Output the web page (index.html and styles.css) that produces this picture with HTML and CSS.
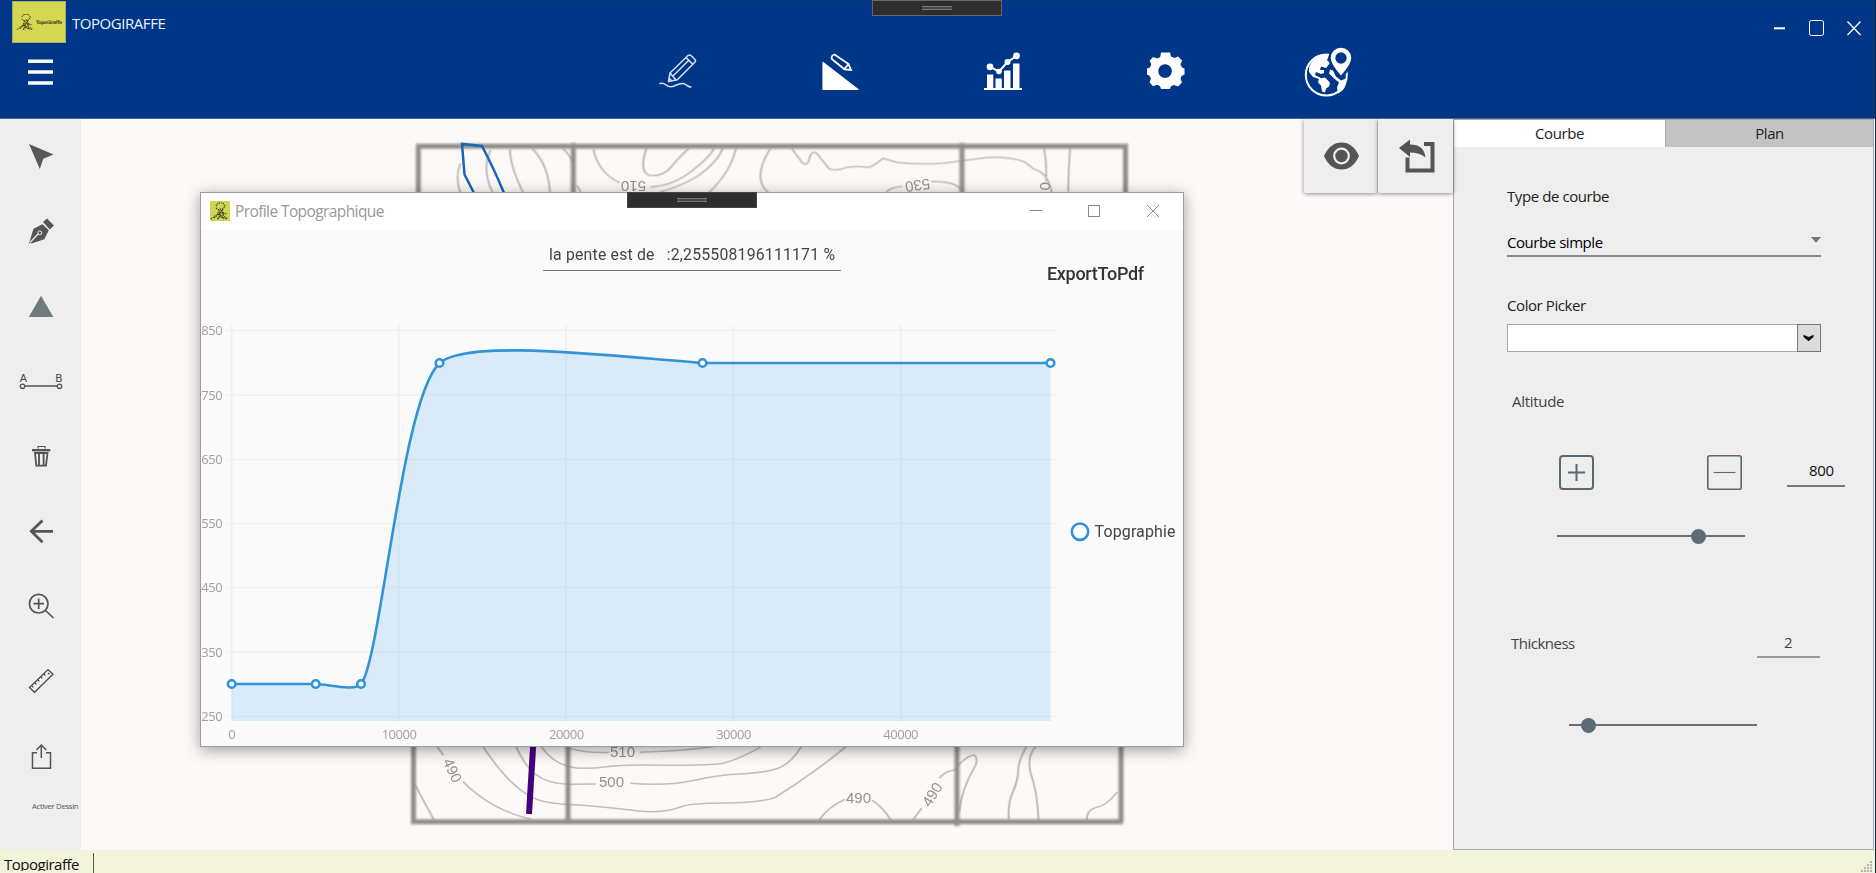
FILE: index.html
```html
<!DOCTYPE html>
<html lang="fr">
<head>
<meta charset="utf-8">
<title>TopoGiraffe</title>
<link rel="stylesheet" href="styles.css">
</head>
<body>
<svg width="0" height="0" class="defs">
  <symbol id="giraffe" viewBox="0 0 20 20">
    <g fill="none" stroke="#3c3d1c" stroke-width="1.100" stroke-dasharray="1.300 .9">
      <path d="M6 5l2-3 5 0 2 3-2 3-4 0"/>
      <path d="M9 9l-1 3 4-2 2 3M6 7l3 2 5-1"/>
      <path d="M1 18l4-3 3-2 3 2-4 3"/>
      <path d="M8 18l3-7 4 5 3 2"/>
      <path d="M9 13l5 5M12 9l1 7M4 17l6-5M13 12l4 1M11 16l6 2"/>
    </g>
  </symbol>
</svg>
<div class="app">
  <header class="header">
    <div class="titlebar">
      <div class="logo">
        <svg width="19" height="20"><use href="#giraffe"/></svg><span>TopoGiraffe</span>
      </div>
      <h1 class="app-title">TOPOGIRAFFE</h1>
      <svg class="window-controls" width="100" height="44" viewBox="1770 0 100 44" fill="none" stroke="#fff">
        <path d="M1774 28.3h11" stroke-width="2"/>
        <rect x="1809.5" y="20.5" width="14" height="15" rx="2"/>
        <path d="M1847.500 21.500l13 13.500M1860.500 21.500l-13 13.500" stroke-width="1.300"/>
      </svg>
    </div>
    <nav class="toolbar">
      <svg class="menu" width="25" height="30" viewBox="0 0 25 30"><path d="M0 3.200h25M0 14h25M0 25h25" stroke="#fff" stroke-width="3.600"/></svg>
      <div class="tools">
        <svg viewBox="649 43.500 58 58"><g fill="none" stroke="#d5e0f3" stroke-width="1.500" stroke-linejoin="round" stroke-linecap="round"><path d="M668.500 82l1.500-8.500 18-17.500q2-1 3.500.5l3.300 3.300q1.500 1.500 0 3l-17.500 17.500zM670 73.500l6 7M686 58l7 7M673 76.500l16-16M669.500 79l2 2M660 84c5-2 6 3.500 11 3.300 5-.5 7-3.800 12-3.300 4 .500 4 3.500 8 3.500"/></g></svg>
        <svg viewBox="812 43.500 58 58"><path d="M823 63v27h35z" fill="#fff" stroke="#fff" stroke-width="1.200" stroke-linejoin="round"/><path d="M834.500 55l14 9.500 2.500 6-6.500-.7-12.500-10q-1.500-3.500 2.500-4.800zM848.500 64.500l-4 5" fill="none" stroke="#fff" stroke-width="1.800"/></svg>
        <svg viewBox="974 43.500 58 58"><g fill="#fff"><path d="M984 88.500h38v2h-38zM987 75h6.300v14H987zM995.500 79h6.300v10h-6.300zM1004 71h6.500v18h-6.500zM1013 64h6.500v25h-6.500z"/><circle cx="990" cy="67.300" r="3.400"/><circle cx="999" cy="72" r="2.800"/><circle cx="1007.500" cy="62.500" r="3"/><circle cx="1016.500" cy="56.300" r="3.400"/></g><path d="M990 67.300l9 4.700 8.500-9.500 9-6" fill="none" stroke="#fff" stroke-width="2"/></svg>
        <svg viewBox="1137 43.500 58 58"><path fill="#fff" fill-rule="evenodd" d="M1161 53h9l1 4 3.500 1.500 3.500-1.500 4 4-1.500 4 1.500 3 2.500 1v6l-3 1.500-1 3 1.500 3.500-4 4-4-1.500-3 1.200-1 2.800h-9l-1-3-3-1.200-4 1.500-3.500-4 1.500-3.500-1.500-3-2.500-1.200v-6l3-1.200 1.200-3-1.500-4 3.500-3.500 4 1.500 3-1.500zM1165 64.700a6.800 6.800 0 1 0 .1 0z"/></svg>
        <svg viewBox="1299 42.500 58 58"><circle cx="1326.300" cy="74.500" r="20.500" fill="none" stroke="#fff" stroke-width="2"/><path fill="#fff" d="M1309 67q3-9 12-12l9-1.500-3 6 3 3-4 5-5-1.500-1 3.500h4v3l-3 1-5-2-1 3 6 3-2 1-6-2-4-5zM1319 78l6-1 5 5-1 4-3 2-1 4-3-1-1-6-3-3zM1330 69l3 1 3 6 5 4 5-2q1 11-8 15l-1-6 2-5-6-5-4-4z"/><path d="M1341 79q-12.500-13.500-12.500-21.300a12.500 12.500 0 0 1 25 0q0 7.800-12.500 21.300z" fill="#003687"/><path d="M1341 75q-10.300-11.500-10.300-17.500a10.300 10.300 0 0 1 20.600 0q0 6-10.300 17.500z" fill="#fff"/><circle cx="1341" cy="57.500" r="5.700" fill="#003687"/></svg>
      </div>
    </nav>
  </header>

  <main class="workspace">
    <aside class="sidebar">
      <svg viewBox="0 119 81 75"><path d="M29 144l24.500 10.500-10.200 4.200-3.500 10.300z" fill="#595959"/></svg>
      <svg viewBox="0 194 81 75"><g fill="#555"><path d="M29 243.300l4.500-14.500 9-4.500 6.300 6-4.500 9-12 4z"/><path d="M43 222l4-3.500 7 7-4.200 4z"/></g><path d="M30 242.500l9-9.500" stroke="#eee" stroke-width="1.200"/><circle cx="39.800" cy="232.800" r="1.900" fill="#555" stroke="#eee"/></svg>
      <svg viewBox="0 269 81 75"><path d="M41 295.700l12.300 21.300H28.800z" fill="#6f7b7c"/></svg>
      <svg viewBox="0 344 81 75"><g fill="none" stroke="#555" stroke-width="1.300"><circle cx="22.500" cy="386.300" r="2.200"/><circle cx="59.500" cy="386.300" r="2.200"/><path d="M25 386h32.500"/></g><text x="19.700" y="382" class="ab">A</text><text x="55.300" y="382" class="ab">B</text></svg>
      <svg viewBox="0 419 81 75"><g fill="none" stroke="#555"><path d="M38 448.500v-2h7v2" stroke-width="1.200"/><path d="M32 450.200h18.300" stroke-width="2.400"/><path d="M35 453l1.300 12.700h9.700l1.500-12.700z" stroke-width="1.800"/><path d="M39 454v11M43.600 454v11" stroke-width="1.900"/></g></svg>
      <svg viewBox="0 494 81 75"><path d="M53 531.300H31M42.500 520.500L31.300 531.300l11.200 11" fill="none" stroke="#555" stroke-width="2.800"/></svg>
      <svg viewBox="0 569 81 75"><path d="M45.500 610.500l8 7.500M33.500 603.700h10.500M38.700 598.500v10.500" fill="none" stroke="#555" stroke-width="1.700"/><circle cx="38.700" cy="603.700" r="9.300" fill="none" stroke="#555" stroke-width="1.700"/></svg>
      <svg viewBox="0 644 81 75"><g fill="none" stroke="#444" stroke-width="1.200"><path d="M29.500 687.500l18.500-18 5 4.800-18.500 18z"/><path d="M32 686l1.300 1.300M35 683l1.300 1.300M38 680l1.300 1.300M41 677l1.300 1.300M44 674.200l1.300 1.300M48 673l1.500 1.200"/></g></svg>
      <svg viewBox="0 719 81 75"><path d="M37 752.700h-4.500v15.500h18v-15.500h-4.500M41.300 758v-13M36.300 750l5-5 5 5" fill="none" stroke="#555" stroke-width="1.500"/></svg>
      <span class="draw-label">Activer Dessin</span>
    </aside>

    <section class="canvas">
      <svg class="map" width="1372" height="731" viewBox="81 119 1372 731">
        <g class="contours">
          <g transform="translate(400 130) scale(.4719 .33333)">
            <path d="M128 100q-12 40 0 90M192 60q-20 60 5 130M233 58q0 50 28 130M280 55q35 50 38 135M345 55q15 20 20 40M375 165l8 22M410 58q10 70 55 100M522 55q-18 80 12 82 25 0 40-25 10-20 38-57M530 171q50-4 90-50 40-45 45-66M550 187q70-30 100-70 25-30 34-62M655 187q45-60 57-132M785 55q-40 90-5 132M830 55l22 42q12 15 16-15 8-30 22 0l18 32q8 10 30 2 18-10 55-4 12-5 30-27l30 12q50 8 100 2l90-16q45-4 80 12l20 22q30 10 38 70M1030 187q10-16 35-18M1125 155q45-4 62 20M1365 55q6 50 4 100M1420 55q-4 70-4 130"/>
          </g>
          <g transform="translate(400 740) scale(.4719 .33333)">
            <path d="M32 135l40 105M78 18l14 28M133 125q60 85 145 113M175 18q60 130 115 160 30 15 90 17 80 10 120 17 60 10 100-14 20-8 90-9 80-2 105-17 80-70 152-154M245 18q20 60 40 83 30 32 75 32l55-1M488 130q80 8 130-8 40-12 75-18 80-4 110-20 30-20 48-66M298 18q25 50 60 62 30 10 80 0 40-8 120-4 80 0 120-5 30-5 90-53M360 25q35 15 83 12M508 37q100-5 162-18M888 240q20-40 55-62M1000 180q25 25 40 60M1087 240l18-35M1143 115q12-22 32-25 20-38 40-45 10 5 5 30-30 70-35 140M1328 18q-20 50-18 80-2 30-12 60-10 30-8 80M1348 18q-20 30-12 80 15 60 17 142M1455 240q0-30 20-38 20-2 45-46"/>
          </g>
        </g>
        <g class="frame">
          <path d="M416 146.300h712M411 821.700h712M418.300 146v47M573.300 143v50M962 143v50M1125.500 146v47M413.500 740v82M568 740v82M957 740v86M1121 740v82"/>
        </g>
        <g class="map-labels">
          <text x="-12" y="5" transform="translate(634 186) rotate(180)">510</text>
          <text x="-12" y="5" transform="translate(918 185) rotate(172)">530</text>
          <text x="0" y="5" transform="translate(1045 182) rotate(90)">0</text>
          <text x="610" y="757">510</text><text x="599" y="786.500">500</text><text x="846" y="803">490</text>
          <text x="-12" y="5" transform="translate(452 770) rotate(65)">490</text>
          <text x="-12" y="5" transform="translate(932 795) rotate(-58)">490</text>
        </g>
        <path d="M474 193l-9.500-18.500-2.500-30.500 20 2q13 25 22 47" fill="none" stroke="#1565ba" stroke-width="2.500"/>
        <path d="M533.500 740L529 814" stroke="#450080" stroke-width="6"/>
      </svg>
      <div class="map-actions">
        <button><svg width="73" height="74" viewBox="1304 119 73 74"><path d="M1324 156q6-13.500 17.500-13.500T1359 156q-6 13.500-17.500 13.500T1324 156z" fill="#555"/><circle cx="1341.500" cy="156" r="7.300" fill="none" stroke="#eee" stroke-width="2.200"/></svg></button>
        <button><svg width="75" height="74" viewBox="1378 119 75 74"><path d="M1424 144h8.500v26.500h-25v-13" fill="none" stroke="#555" stroke-width="4"/><path d="M1399 148l11-8.500v5q14 0 15.500 13-6-5-15.500-5v4.500z" fill="#555"/></svg></button>
      </div>
    </section>

    <aside class="panel">
      <div class="tabs"><div class="tab active">Courbe</div><div class="tab">Plan</div></div>
      <div class="form">
        <label class="type-label">Type de courbe</label>
        <div class="select"><span>Courbe simple</span><i></i></div>
        <label class="color-label">Color Picker</label>
        <div class="color"><svg width="24" height="28" viewBox="0 0 24 28"><path d="M6 10.500l5.500 2.500 5.500-2.500v2.500l-5.500 4.500-5.500-4.500z" fill="#111"/></svg></div>
        <label class="alt-label">Altitude</label>
        <div class="stepper">
          <svg width="35" height="35" fill="none" stroke="#5a6871"><rect x="1" y="1" width="33" height="33" rx="3" stroke-width="2"/><path d="M9 17.500h17M17.500 9v17" stroke-width="2"/></svg>
          <svg width="35" height="35" fill="none" stroke="#5a6871"><rect x=".8" y=".8" width="33.400" height="33.400" rx="2" stroke-width="1.600"/><path d="M6.500 17.500h22" stroke-width="1.100"/></svg>
          <div class="value alt-value">800</div>
        </div>
        <div class="slider alt-slider"><b></b></div>
        <div class="thickness"><label>Thickness</label><div class="value thick-value">2</div></div>
        <div class="slider thick-slider"><b></b></div>
      </div>
    </aside>
  </main>

  <footer class="statusbar"><span>Topogiraffe</span><i></i>
    <svg width="16" height="14" viewBox="0 0 16 14"><path d="M11 2h2M8 5h5M5 8h8M2 11h11" stroke="#b5b5a8" stroke-width="2" stroke-dasharray="2 1"/></svg>
  </footer>

  <div class="debug-bar main-bar"><i></i></div>

  <section class="dialog">
    <div class="dialog-title">
      <svg class="dialog-icon" width="20" height="20"><use href="#giraffe"/></svg>
      <h2>Profile Topographique</h2>
      <svg width="130" height="20" viewBox="1029 201 130 20" fill="none" stroke="#888"><path d="M1030 210.500h12M1147 205l12 12M1159 205l-12 12"/><rect x="1088.500" y="205.500" width="11" height="11"/></svg>
    </div>
    <div class="dialog-head">
      <div class="slope"><span>la pente est de</span><span class="ratio">:2,255508196111171 %</span></div>
      <button class="export">ExportToPdf</button>
    </div>
    <svg class="chart" width="982" height="446" viewBox="201 300 982 446">
      <path d="M231.700 684L315.700 684C327 684 355 692 361 684C381 660 401 400 439.500 363C468 339 600 355 702.500 363H1050.500V721H231.700z" fill="#d9ebf9"/>
      <path class="grid" d="M227 330.500h829M227 395h829M227 459.500h829M227 523.500h829M227 587.500h829M227 652h829M227 716.500h829M231.700 325v396M399 325v396M566.300 325v396M733.500 325v396M900.700 325v396"/>
      <path class="line" d="M231.700 684L315.700 684C327 684 355 692 361 684C381 660 401 400 439.500 363C468 339 600 355 702.500 363H1050.500"/>
      <g class="points"><circle cx="231.700" cy="684" r="3.800"/><circle cx="315.700" cy="684" r="3.800"/><circle cx="361" cy="684" r="3.800"/><circle cx="439.500" cy="363" r="3.800"/><circle cx="702.500" cy="363" r="3.800"/><circle cx="1050.500" cy="363" r="3.800"/><circle cx="1080" cy="531.700" r="8.200"/></g>
      <g class="axis">
        <text x="201.300" y="335">850</text><text x="201.300" y="399.500">750</text><text x="201.300" y="464">650</text><text x="201.300" y="528">550</text><text x="201.300" y="592">450</text><text x="201.300" y="656.500">350</text><text x="201.300" y="721">250</text>
      </g>
      <g class="axis x"><text x="231.700" y="739">0</text><text x="399" y="739">10000</text><text x="566.300" y="739">20000</text><text x="733.500" y="739">30000</text><text x="900.700" y="739">40000</text></g>
      <text class="legend" x="1094.500" y="537" textLength="81">Topgraphie</text>
    </svg>
    <div class="debug-bar dialog-bar"><i></i></div>
  </section>
</div>
</body>
</html>
```
FILE: styles.css
```css
* { box-sizing: border-box; }
body { margin: 0; font-family: "Open Sans", "Noto Sans", sans-serif; font-size: 15px; color: #333; background: #12283a; overflow: hidden; }
h1, h2 { margin: 0; font-weight: 400; }
button { margin: 0; padding: 0; border: 0; background: none; }
svg { display: block; }
.defs { position: absolute; }
.app { position: relative; width: 1875px; height: 873px; display: flex; flex-direction: column; background: #fdf9f8; }

.header { height: 119px; background: #003687; border-top: 1px solid #093574; border-bottom: 1px solid #53648d; }
.titlebar { display: flex; height: 43px; }
.logo { display: flex; align-items: center; width: 54px; height: 42px; margin-left: 12px; padding-left: 3px; background: #d4d752; border: 1px solid #a4ae6c; }
.logo span { font: bold 4.800px "DejaVu Sans", sans-serif; letter-spacing: -.5px; color: #4b4c20; margin-left: 1px; }
.app-title { margin-left: 6px; font-size: 15px; line-height: 44px; color: #e9f3ff; letter-spacing: -.45px; }
.window-controls { margin-left: auto; margin-right: 5px; margin-top: -1px; }
.toolbar { display: flex; height: 74px; }
.menu { margin: 14px 0 0 28px; }
.tools { display: flex; margin-left: 596px; gap: 104.500px; }
.tools svg { width: 58px; height: 58px; margin-top: -1px; }

.workspace { display: flex; height: 731px; }
.sidebar { width: 81px; background: #eee; flex: none; }
.sidebar svg { width: 81px; height: 75px; }
.ab { font: 10.500px "DejaVu Sans", sans-serif; fill: #444; }
.draw-label { display: block; margin: 6px 0 0 32px; font-size: 7.700px; line-height: 12px; letter-spacing: -.3px; color: #555; white-space: nowrap; }
.canvas { position: relative; width: 1372px; flex: none; }
.contours { fill: none; stroke: #c2bebd; stroke-width: 4.500; filter: blur(.7px); }
.frame { fill: none; stroke: #918d8c; stroke-width: 5; filter: blur(.9px); }
.map-labels { font: 15px "Liberation Sans", sans-serif; fill: #95918f; filter: blur(.6px); }
.map-actions { position: absolute; top: 0; right: 0; display: flex; gap: 1px; }
.map-actions button { background: #eee; border-radius: 0 0 2px 2px; box-shadow: 0 1px 4px rgba(0,0,0,.45); clip-path: inset(0 -4px -6px -4px); }

.panel { width: 421px; flex: none; background: #eee; border: 1px solid #a9a9a9; color: #222; }
.tabs { display: flex; height: 27px; }
.tab { flex: 1; text-align: center; line-height: 26px; font-size: 15px; background: #c3c3c3; letter-spacing: -.4px; }
.tab.active { flex: 0 0 212px; background: #fff; border-right: 1px solid #aaa; }
.form { display: flex; flex-direction: column; padding-left: 53px; }
.form label { font-size: 15px; line-height: 20px; white-space: nowrap; letter-spacing: -.42px; }
.type-label { margin-top: 39px; }
.select { display: flex; justify-content: space-between; width: 314px; height: 30px; margin-top: 21px; border-bottom: 2px solid #888; color: #000; line-height: 30px; letter-spacing: -.45px; }
.select i { margin-top: 10px; width: 0; height: 6px; border: 5px solid transparent; border-top: 6px solid #777; border-bottom: 0; }
.color-label { margin-top: 38px; }
.color { display: flex; justify-content: flex-end; width: 314px; height: 28px; margin-top: 9px; border: 1px solid #aaa; background: #fff; }
.color svg { background: #dcdcdc; border: 1px solid #777; margin: -1px; }
.form .alt-label { margin: 39px 0 0 5px; color: #444; letter-spacing: -.3px; }
.stepper { display: flex; margin: 44px 0 0 52px; }
.stepper svg + svg { margin-left: 113px; }
.value { border-bottom: 2px solid #777; font-size: 15px; }
.alt-value { width: 58px; height: 32px; margin-left: 45px; padding-left: 22px; line-height: 31px; letter-spacing: -.3px; color: #111; }
.slider { width: 188px; height: 16px; display: flex; align-items: center; background: linear-gradient(#6d6f73, #6d6f73) center / 100% 2px no-repeat; }
.slider b { width: 15px; height: 15px; border-radius: 50%; background: #5c6b77; }
.alt-slider { margin: 38px 0 0 50px; padding-left: 134px; }
.thickness { display: flex; margin: 84px 0 0 4px; color: #444; }
.thickness label { margin-top: 5px; width: 246px; letter-spacing: -.5px; }
.thick-value { width: 63px; height: 30px; padding-left: 27px; line-height: 28px; border-color: #999; }
.thick-slider { margin: 59px 0 0 62px; padding-left: 12px; }

.statusbar { display: flex; height: 23px; background: #f3f4dc; color: #111; }
.statusbar span { width: 90px; height: 21px; padding-left: 4px; line-height: 29px; overflow: hidden; font-size: 15px; letter-spacing: -.5px; }
.statusbar i { width: 1px; margin: 3px 0 0 3px; background: #555; }
.statusbar svg { margin: 10px 0 0 auto; }

.debug-bar { position: absolute; width: 130px; height: 16px; background: #2d2d30; border: 1px solid #6b6665; padding: 5px 49px; }
.debug-bar i { display: block; height: 4px; border: 1px solid #77777a; border-left: 0; border-right: 0; background: #47474a; }
.main-bar { left: 872px; top: 0; }
.dialog-bar { left: 426px; top: -1px; border-color: #444; }

.dialog { position: absolute; left: 200px; top: 192px; width: 984px; height: 555px; border: 1px solid #9d9d9d; background: #fafafa; box-shadow: 0 3px 14px rgba(0,0,0,.38); font-family: Roboto, sans-serif; }
.dialog-title { display: flex; align-items: center; height: 37px; padding: 0 24px 1px 9px; background: #fff; }
.dialog-icon { background: #d0d353; }
.dialog-title h2 { margin-left: 5px; font: 15.500px "Open Sans", sans-serif; color: #999; letter-spacing: -.6px; flex: 1; }
.dialog-head { display: flex; height: 70px; }
.slope { display: flex; width: 298px; height: 41px; margin-left: 342px; padding: 10px 0 0 6px; border-bottom: 1.500px solid #777; font-size: 15.800px; line-height: 30px; letter-spacing: .2px; color: #444; white-space: nowrap; }
.ratio { margin-left: 12px; }
.export { margin: 27px 0 0 206px; height: 32px; font: 500 18px Roboto, sans-serif; letter-spacing: -.3px; color: #333; }
.grid { fill: none; stroke: rgba(90,110,120,.07); stroke-width: 1.500; }
.line { fill: none; stroke: #3294d8; stroke-width: 2.600; }
.points { fill: #fff; stroke: #3294d8; stroke-width: 2.600; }
.axis { font: 13px "Open Sans", sans-serif; fill: #a1a1a1; letter-spacing: -.5px; }
.axis.x { text-anchor: middle; }
.legend { font: 16px Roboto, sans-serif; fill: #444; }
```
